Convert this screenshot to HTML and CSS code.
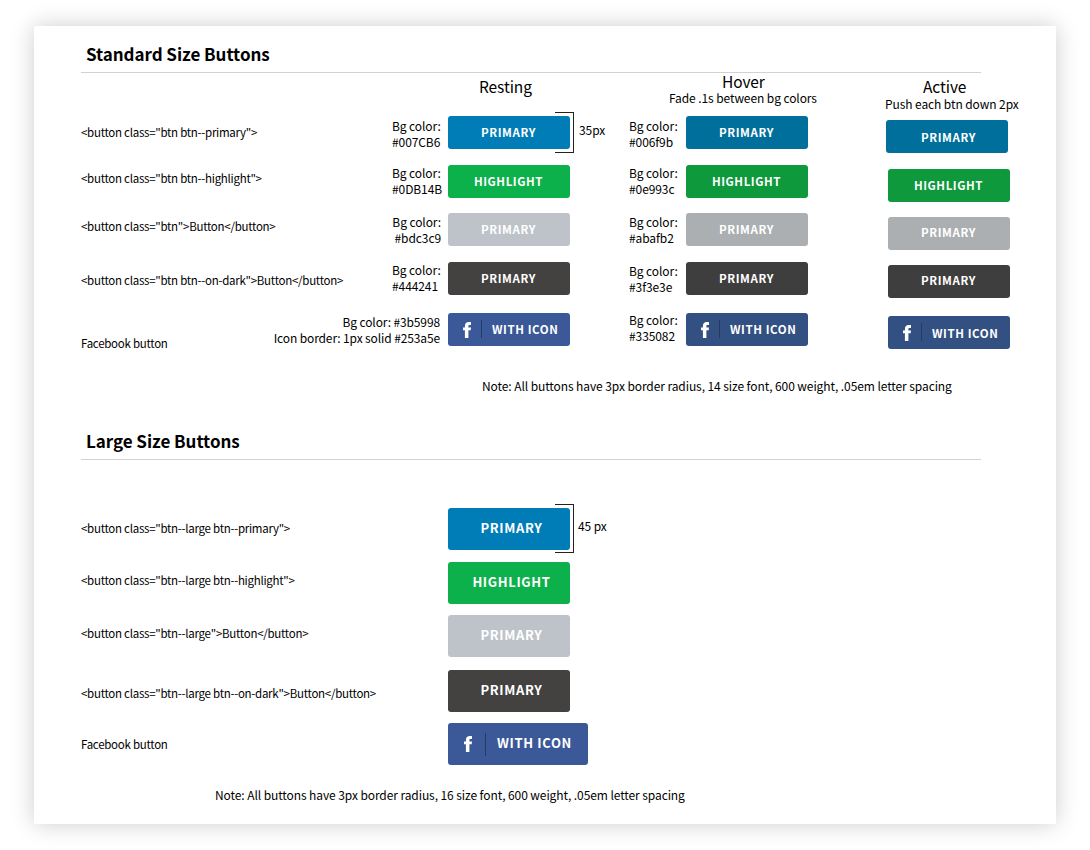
FILE: index.html
```
<!DOCTYPE html>
<html lang="en">
<head>
<meta charset="utf-8">
<title>Button styles</title>
<link rel="stylesheet" href="styles.css">
</head>
<body>
<svg class="defs" aria-hidden="true">
  <symbol id="fb" viewBox="0 0 8 16"><path d="M8 .1V2.9H6.6C5.6 2.9 5.4 3.4 5.4 4.2V5.5H8L7.7 8.3H5.4V16H1.9V8.3H0V5.5H1.9V3.9C1.9 1.4 3.4 0 5.8 0C6.9 0 7.7.1 8 .1Z"/></symbol>
</svg>
<main class="sheet">
  <section>
    <h2 class="title">Standard Size Buttons</h2>
    <div class="columns">
      <div class="codes">
        <code>&lt;button class="btn btn--primary"&gt;</code>
        <code>&lt;button class="btn btn--highlight"&gt;</code>
        <code>&lt;button class="btn"&gt;Button&lt;/button&gt;</code>
        <code>&lt;button class="btn btn--on-dark"&gt;Button&lt;/button&gt;</code>
        <code>Facebook button</code>
      </div>
      <div class="specs specs--resting">
        <p class="narrow">Bg color:<br>#007CB6</p>
        <p class="narrow">Bg color:<br>#0DB14B</p>
        <p>Bg color:<br>#bdc3c9</p>
        <p class="narrow">Bg color:<br>#444241</p>
        <p class="inset">Bg color: #3b5998<br>Icon border: 1px solid #253a5e</p>
      </div>
      <div class="state state--resting">
        <header><h3>Resting</h3></header>
        <div class="stack">
          <div class="measured">
            <button class="btn btn--primary">PRIMARY</button>
            <div class="bracket"><span>35px</span></div>
          </div>
          <button class="btn btn--highlight">HIGHLIGHT</button>
          <button class="btn">PRIMARY</button>
          <button class="btn btn--on-dark">PRIMARY</button>
          <button class="btn btn--facebook"><svg class="icon"><use href="#fb"/></svg><span class="label">WITH ICON</span></button>
        </div>
      </div>
      <div class="specs specs--hover">
        <p>Bg color:<br>#006f9b</p>
        <p>Bg color:<br>#0e993c</p>
        <p>Bg color:<br>#abafb2</p>
        <p>Bg color:<br>#3f3e3e</p>
        <p>Bg color:<br>#335082</p>
      </div>
      <div class="state state--hover">
        <header><h3>Hover</h3><p>Fade .1s between bg colors</p></header>
        <div class="stack">
          <button class="btn btn--primary">PRIMARY</button>
          <button class="btn btn--highlight">HIGHLIGHT</button>
          <button class="btn">PRIMARY</button>
          <button class="btn btn--on-dark">PRIMARY</button>
          <button class="btn btn--facebook"><svg class="icon"><use href="#fb"/></svg><span class="label">WITH ICON</span></button>
        </div>
      </div>
      <div class="state state--hover state--active">
        <header><h3>Active</h3><p>Push each btn down 2px</p></header>
        <div class="stack">
          <button class="btn btn--primary">PRIMARY</button>
          <button class="btn btn--highlight">HIGHLIGHT</button>
          <button class="btn btn--raised">PRIMARY</button>
          <button class="btn btn--on-dark btn--raised">PRIMARY</button>
          <button class="btn btn--facebook"><svg class="icon"><use href="#fb"/></svg><span class="label">WITH ICON</span></button>
        </div>
      </div>
    </div>
    <p class="note">Note: All buttons have 3px border radius, 14 size font, 600 weight, .05em letter spacing</p>
  </section>

  <section class="large">
    <h2 class="title">Large Size Buttons</h2>
    <div class="columns">
      <div class="codes">
        <code>&lt;button class="btn--large btn--primary"&gt;</code>
        <code>&lt;button class="btn--large btn--highlight"&gt;</code>
        <code>&lt;button class="btn--large"&gt;Button&lt;/button&gt;</code>
        <code>&lt;button class="btn--large btn--on-dark"&gt;Button&lt;/button&gt;</code>
        <code>Facebook button</code>
      </div>
      <div class="stack">
        <div class="measured">
          <button class="btn btn--large btn--primary">PRIMARY</button>
          <div class="bracket"><span>45 px</span></div>
        </div>
        <button class="btn btn--large btn--highlight">HIGHLIGHT</button>
        <button class="btn btn--large">PRIMARY</button>
        <button class="btn btn--large btn--on-dark">PRIMARY</button>
        <button class="btn btn--large btn--facebook"><svg class="icon"><use href="#fb"/></svg><span class="label">WITH ICON</span></button>
      </div>
    </div>
    <p class="note">Note: All buttons have 3px border radius, 16 size font, 600 weight, .05em letter spacing</p>
  </section>
</main>
</body>
</html>
```
FILE: styles.css
```
* { box-sizing: border-box; }

body {
  margin: 0;
  padding: 26px 34px;
  background: #fff;
  color: #000;
  font: 12px/16px "Noto Sans CJK SC", "Noto Sans", sans-serif;
  letter-spacing: -0.09px;
  white-space: nowrap;
}

h2, h3, p { margin: 0; }

.defs { display: none; }

.sheet {
  width: 1022px;
  height: 798px;
  padding: 18px 47px 0;
  background: #fff;
  box-shadow: 0 0 22px rgba(0, 0, 0, .2);
}

.title {
  width: 900px;
  height: 29px;
  padding-left: 5px;
  border-bottom: 1px solid #d2d2d2;
  font-size: 17px;
  font-weight: 700;
  line-height: 20px;
  letter-spacing: -0.05px;
}

.columns { display: flex; align-items: flex-start; }
.columns > * { flex-shrink: 0; }

.codes {
  display: grid;
  grid-template-rows: 46px 48px 54px 63px 16px;
  width: 180px;
  padding-top: 51px;
}

.codes code {
  font: inherit;
  font-size: 11.5px;
  line-height: 16px;
  letter-spacing: -0.27px;
}

.specs { display: grid; padding-top: 45px; }

.specs--resting {
  grid-template-rows: 47px 49px 48px 52px 32px;
  justify-items: end;
  width: 180px;
  margin-right: 7px;
  text-align: right;
}

.specs--resting .narrow { width: 49px; text-align: left; }
.specs--resting .inset { padding-right: 1px; letter-spacing: -0.12px; }

.specs--hover {
  grid-template-rows: 47px 49px 49px 49px 32px;
  width: 57px;
  margin-left: 59px;
}

.state { width: 122px; }
.state header { height: 43px; }
.state h3 { font-size: 15.5px; font-weight: 400; line-height: 16px; }
.state--resting header { padding: 5px 0 0 31px; }
.state--hover h3 { padding-left: 36px; }
.state--hover header p { margin: 1px 0 0 -17px; }

.state--active { width: 124px; margin-left: 78px; }
.state--active header { height: 47px; padding-top: 5px; }
.state--active h3 { padding-left: 37px; }
.state--active header p { margin: 2px 0 0 -1px; }

.stack {
  display: grid;
  grid-template-rows: 49px 48px 49px 51px 33px;
  align-items: start;
}

.btn {
  display: flex;
  align-items: flex-start;
  justify-content: center;
  width: 122px;
  height: 33px;
  padding: 0 1px 0 0;
  border: 0;
  border-radius: 3px;
  background: #bdc3c9;
  color: #fff;
  font: inherit;
  font-size: 11.5px;
  font-weight: 700;
  line-height: 32px;
  letter-spacing: .05em;
}

.btn--primary { background: #007cb6; }
.btn--highlight { background: #0db14b; }
.btn--on-dark { background: #444241; }
.btn--facebook { justify-content: flex-start; background: #3b5998; }

.state--hover .btn { background: #abafb2; }
.state--hover .btn--primary { background: #006f9b; }
.state--hover .btn--highlight { background: #0e993c; }
.state--hover .btn--on-dark { background: #3f3e3e; }
.state--hover .btn--facebook { background: #335082; }

.state--active .stack { grid-template-rows: 49px 48px 48px 51px 33px; justify-items: end; }
.state--active .btn--primary { justify-self: start; padding-left: 4px; line-height: 34px; }
.state--active .btn--raised { line-height: 30px; }
.state--active .btn--facebook { line-height: 34px; }

.icon {
  width: 8px;
  height: 16px;
  margin: 9px 10px 0 15px;
  fill: #fff;
}

.btn--facebook::before {
  content: "";
  order: 1;
  width: 1px;
  height: 18px;
  margin-top: 7px;
  background: #253a5e;
}

.label { order: 2; padding-left: 10px; }

.measured { position: relative; }

.bracket {
  position: absolute;
  top: -4px;
  left: 107px;
  width: 19px;
  height: 41px;
  border: 1px solid #222;
  border-left: 0;
}

.bracket span { position: absolute; top: 9px; left: 24px; }

.note { padding: 27px 0 0 401px; }

.large { padding-top: 36px; }
.large .title { height: 30px; line-height: 21px; }
.large .codes { grid-template-rows: 52px 53px 60px 51px 16px; width: 367px; padding-top: 60px; }
.large .stack { grid-template-rows: 54px 53px 55px 53px 42px; padding-top: 48px; }
.large .bracket { height: 49px; }
.large .bracket span { top: 13px; left: 23px; }
.large .note { padding: 22px 0 0 134px; }

.btn--large {
  height: 42px;
  padding: 0 0 0 5px;
  font-size: 13px;
  line-height: 40px;
}

.btn--large.btn--facebook { width: 140px; padding-left: 0; }
.btn--large .icon { margin: 13px 13px 0 16px; }
.btn--large.btn--facebook::before { height: 23px; margin-top: 10px; }
.btn--large .label { padding-left: 11px; }
```
